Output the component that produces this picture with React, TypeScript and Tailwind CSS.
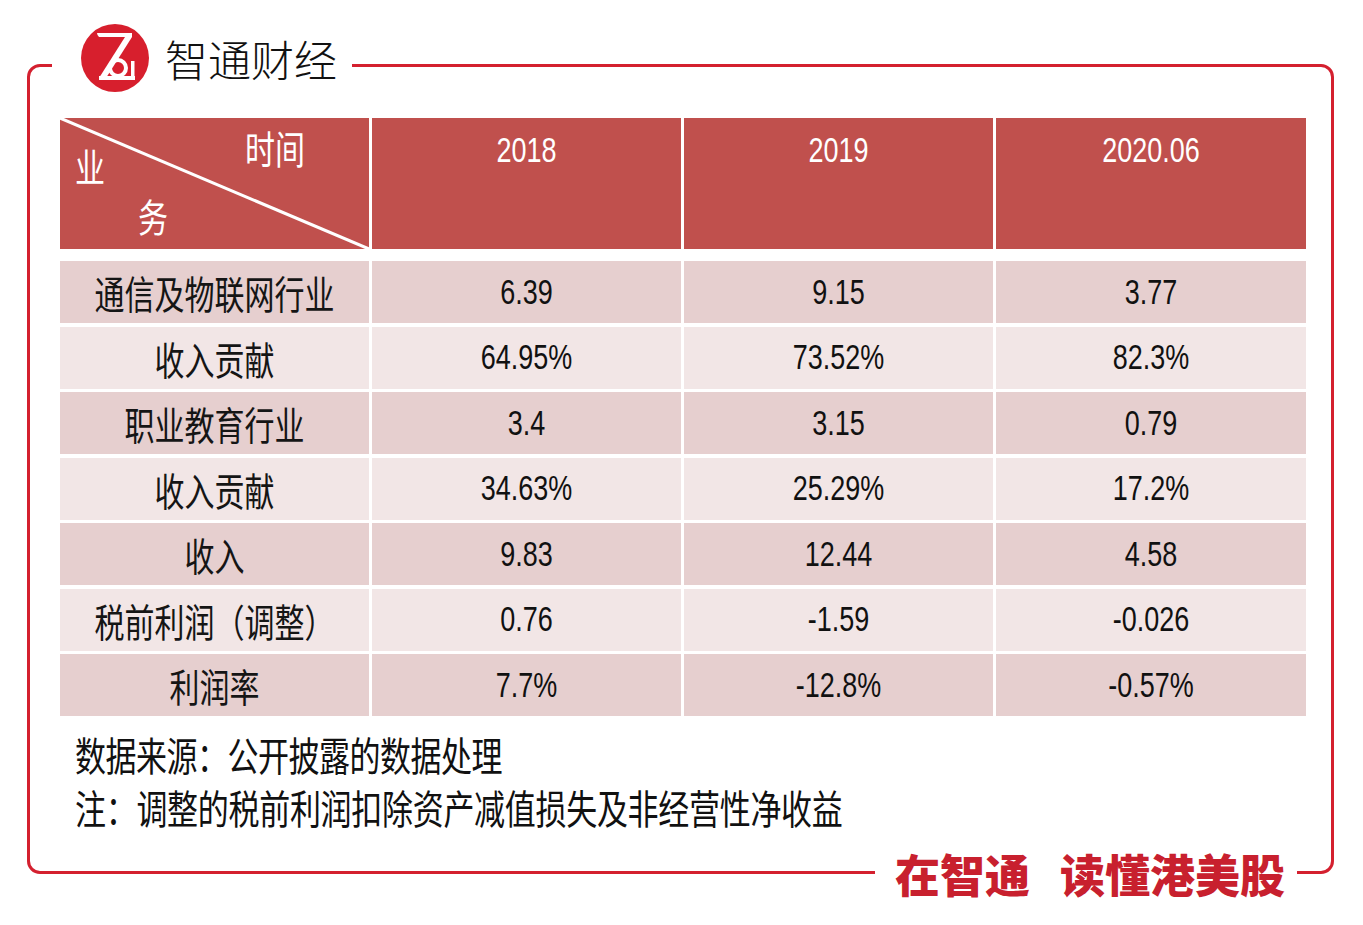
import React from 'react';

const cjk = "font-['Noto_Sans_CJK_SC',sans-serif]";
const num = "font-['Liberation_Sans',sans-serif]";

const rows = [
  { label: '通信及物联网行业', values: ['6.39', '9.15', '3.77'] },
  { label: '收入贡献', values: ['64.95%', '73.52%', '82.3%'] },
  { label: '职业教育行业', values: ['3.4', '3.15', '0.79'] },
  { label: '收入贡献', values: ['34.63%', '25.29%', '17.2%'] },
  { label: '收入', values: ['9.83', '12.44', '4.58'] },
  { label: '税前利润（调整）', values: ['0.76', '-1.59', '-0.026'] },
  { label: '利润率', values: ['7.7%', '-12.8%', '-0.57%'] },
];

const years = ['2018', '2019', '2020.06'];

const Logo = () => (
  <svg width="68" height="68" viewBox="0 0 68 68">
    <circle cx="34" cy="34" r="34" fill="#d71f2d" />
    <path d="M16 9 L51 9 L51 13 L18 13 Q16 11 16 9 Z" fill="#fff" />
    <path d="M44 13 L51 13 L25 54 L18 54 Z" fill="#fff" />
    <rect x="18" y="52" width="36" height="4" fill="#fff" />
    <circle cx="37" cy="44" r="8" fill="none" stroke="#fff" strokeWidth="4" />
    <rect x="50" y="37" width="3.5" height="17" fill="#fff" />
  </svg>
);

const Cjk = ({ children, className = '' }: { children: React.ReactNode; className?: string }) => (
  <span className={`inline-block ${cjk} text-[30px] leading-none scale-y-[1.28] ${className}`}>{children}</span>
);

const Num = ({ children, className = '' }: { children: React.ReactNode; className?: string }) => (
  <span className={`inline-block ${num} text-[27px] leading-none scale-y-[1.32] ${className}`}>{children}</span>
);

export default function App() {
  return (
    <div className="w-[1363px] h-[925px] bg-white pt-[64px] pl-[27px]">
      <div className="relative w-[1307px] h-[810px] border-[3px] border-[#d4202f] rounded-[13px] pt-[51px] pl-[30px]">
        {/* brand header over the top line */}
        <div className="absolute left-[22px] -top-[43px] h-[68px] flex items-center gap-[16px] bg-white pl-[29px] pr-[15px]">
          <Logo />
          <span className={`${cjk} text-[43px] leading-none text-[#111] font-light`}>智通财经</span>
        </div>

        {/* table header */}
        <div className="grid grid-cols-[309px_309px_309px_310px] gap-x-[3px] w-[1246px]">
          <div className="relative h-[131px] bg-[#c0504d] text-white">
            <svg className="absolute inset-0 w-full h-full" viewBox="0 0 100 100" preserveAspectRatio="none">
              <line x1="0" y1="0" x2="100" y2="100" stroke="#fff" strokeWidth="3" vectorEffect="non-scaling-stroke" />
            </svg>
            <Cjk className="absolute left-[185px] top-[14px]">时间</Cjk>
            <Cjk className="absolute left-[15px] top-[32px]">业</Cjk>
            <Cjk className="absolute left-[78px] top-[82px]">务</Cjk>
          </div>
          {years.map((y) => (
            <div key={y} className="h-[131px] bg-[#c0504d] flex justify-center pt-[31px]">
              <Num className="text-white">{y}</Num>
            </div>
          ))}
        </div>

        {/* table body */}
        <div className="mt-[12px] flex flex-col gap-y-[3.5px] w-[1246px]">
          {rows.map((r, i) => (
            <div key={i} className="grid grid-cols-[309px_309px_309px_310px] gap-x-[3px] h-[62px]">
              <div className={`flex items-center justify-center ${i % 2 === 0 ? 'bg-[#e6cfcf]' : 'bg-[#f2e6e6]'}`}>
                <Cjk className="text-[#151515]">{r.label}</Cjk>
              </div>
              {r.values.map((v, j) => (
                <div
                  key={j}
                  className={`flex items-center justify-center ${i % 2 === 0 ? 'bg-[#e6cfcf]' : 'bg-[#f2e6e6]'}`}
                >
                  <Num className="text-[#111]">{v}</Num>
                </div>
              ))}
            </div>
          ))}
        </div>

        {/* notes */}
        <div className="mt-[18px] pl-[15px] flex flex-col items-start gap-y-[22px] text-[#111]">
          <Cjk className="text-[31px] origin-top-left tracking-[-0.5px]">数据来源：公开披露的数据处理</Cjk>
          <Cjk className="text-[31px] origin-top-left tracking-[-0.3px]">注：调整的税前利润扣除资产减值损失及非经营性净收益</Cjk>
        </div>

        {/* slogan over the bottom line */}
        <div className="absolute left-[845px] -bottom-[26px] h-[48px] flex items-center bg-white pl-[20px] pr-[12px] gap-[30px] text-[#c8202e]">
          <span className={`${cjk} text-[45px] leading-none font-black`}>在智通</span>
          <span className={`${cjk} text-[45px] leading-none font-black`}>读懂港美股</span>
        </div>
      </div>
    </div>
  );
}
